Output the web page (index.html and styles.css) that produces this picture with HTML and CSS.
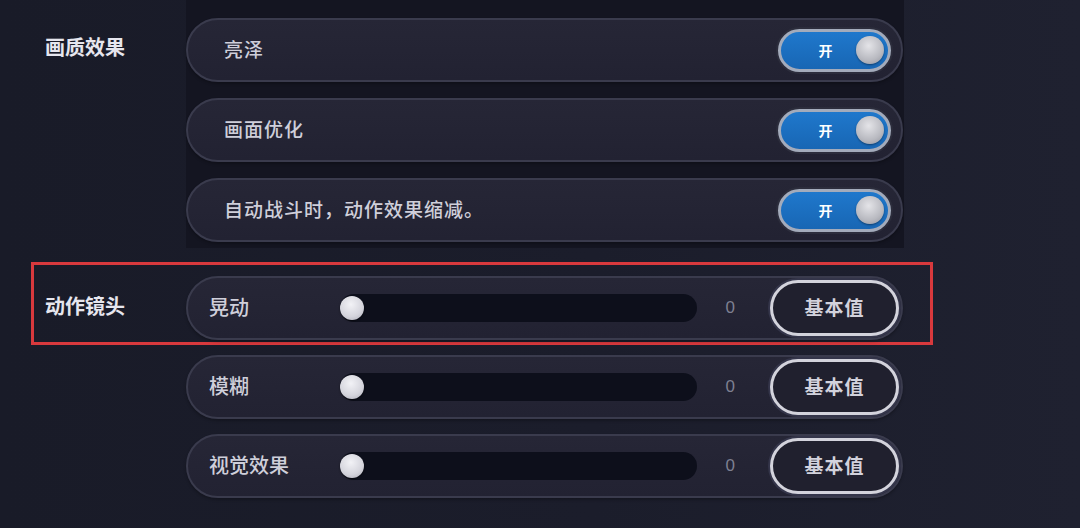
FILE: index.html
```html
<!DOCTYPE html>
<html lang="zh-CN">
<head>
<meta charset="utf-8">
<title>设置</title>
<link rel="stylesheet" href="styles.css">
</head>
<body>
<div class="page">
  <section class="group quality">
    <div class="group-label">画质效果</div>
    <div class="backing">
      <div class="row toggle-row">
        <span class="row-text">亮泽</span>
        <div class="toggle"><span class="toggle-text">开</span><span class="knob"></span></div>
      </div>
      <div class="row toggle-row">
        <span class="row-text">画面优化</span>
        <div class="toggle"><span class="toggle-text">开</span><span class="knob"></span></div>
      </div>
      <div class="row toggle-row">
        <span class="row-text">自动战斗时，动作效果缩减。</span>
        <div class="toggle"><span class="toggle-text">开</span><span class="knob"></span></div>
      </div>
    </div>
  </section>

  <section class="group camera">
    <div class="highlight">
      <div class="group-label inline">动作镜头</div>
      <div class="row slider-row">
        <span class="slider-label">晃动</span>
        <div class="track"><span class="thumb"></span></div>
        <span class="value">0</span>
        <button class="reset">基本值</button>
      </div>
    </div>
    <div class="plain-rows">
      <div class="row slider-row">
        <span class="slider-label">模糊</span>
        <div class="track"><span class="thumb"></span></div>
        <span class="value">0</span>
        <button class="reset">基本值</button>
      </div>
      <div class="row slider-row">
        <span class="slider-label">视觉效果</span>
        <div class="track"><span class="thumb"></span></div>
        <span class="value">0</span>
        <button class="reset">基本值</button>
      </div>
    </div>
  </section>
</div>
</body>
</html>
```

FILE: styles.css
```css
* { box-sizing: border-box; }

html, body {
  margin: 0;
  padding: 0;
}

body {
  width: 1080px;
  height: 528px;
  overflow: hidden;
  background: linear-gradient(90deg, #191b28 0%, #1b1d2b 55%, #1f2130 100%);
  font-family: "Noto Sans CJK SC", "Noto Sans", sans-serif;
  color: #d4d4de;
}

.page {
  display: flex;
  flex-direction: column;
}

.group.quality {
  display: flex;
  padding-left: 45px;
}

.group-label {
  width: 141px;
  flex: none;
  font-size: 20px;
  font-weight: 700;
  color: #e6e6ee;
  line-height: 26px;
  padding-top: 34px;
}

.group-label.inline {
  padding-top: 0;
  align-self: center;
  margin-top: -3px;
}

.backing {
  width: 718px;
  background: #141521;
  padding: 18px 0 6px;
  display: flex;
  flex-direction: column;
  gap: 16px;
}

.row {
  height: 64px;
  width: 717px;
  border-radius: 32px;
  background: linear-gradient(180deg, #262636 0%, #222232 100%);
  border: 2px solid #3a3b4d;
  display: flex;
  align-items: center;
  box-shadow: 0 2px 3px rgba(0, 0, 0, 0.25);
}

.toggle-row {
  padding: 0 10px 0 36px;
  justify-content: space-between;
}

.row-text {
  font-size: 19px;
  font-weight: 500;
  color: #cfcfda;
  letter-spacing: 1px;
  margin-top: -3px;
}

.toggle {
  width: 113px;
  height: 43px;
  border-radius: 22px;
  border: 3px solid #a3abbb;
  background: linear-gradient(180deg, #1f78cc 0%, #1866b4 100%);
  display: flex;
  align-items: center;
  padding: 0 4px 0 0;
  box-shadow: 0 0 0 2px #2c2d3c;
}

.toggle-text {
  flex: 1;
  text-align: center;
  color: #ffffff;
  font-size: 14px;
  font-weight: 700;
  padding-left: 14px;
}

.knob {
  width: 28px;
  height: 28px;
  border-radius: 50%;
  background: radial-gradient(circle at 45% 35%, #e4e4e8 0%, #b8b9c0 60%, #8f9099 100%);
  box-shadow: 0 1px 2px rgba(0, 0, 0, 0.4);
}

.group.camera {
  margin-top: 14px;
  display: flex;
  flex-direction: column;
}

.highlight {
  margin-left: 31px;
  width: 902px;
  height: 83px;
  border: 3px solid #d8393d;
  padding: 11px 27px 3px 11px;
  display: flex;
}

.slider-row {
  padding: 0 2px 0 21px;
}

.slider-label {
  width: 131px;
  flex: none;
  font-size: 20px;
  font-weight: 500;
  color: #cfcfda;
  margin-top: -3px;
}

.track {
  width: 358px;
  height: 28px;
  border-radius: 14px;
  background: #0d0f1b;
  display: flex;
  align-items: center;
}

.thumb {
  width: 24px;
  height: 24px;
  border-radius: 50%;
  background: radial-gradient(circle at 45% 35%, #f2f2f6 0%, #d4d4dc 60%, #a9a9b4 100%);
  box-shadow: 0 1px 2px rgba(0, 0, 0, 0.5);
}

.value {
  width: 64px;
  text-align: center;
  font-family: "Liberation Sans", "Noto Sans", sans-serif;
  font-size: 17px;
  color: #7e8091;
  padding-left: 2px;
}

.reset {
  margin-left: 9px;
  width: 129px;
  height: 56px;
  border-radius: 28px;
  border: 3px solid #d3d3dc;
  background: #20202e;
  color: #d2d2dc;
  font-family: "Noto Sans CJK SC", "Noto Sans", sans-serif;
  font-size: 19px;
  font-weight: 700;
  letter-spacing: 1px;
  box-shadow: 0 0 0 2px #34354a;
  padding: 0 0 3px;
}

.plain-rows {
  margin-left: 186px;
  margin-top: 10px;
  display: flex;
  flex-direction: column;
  gap: 15px;
}
```
